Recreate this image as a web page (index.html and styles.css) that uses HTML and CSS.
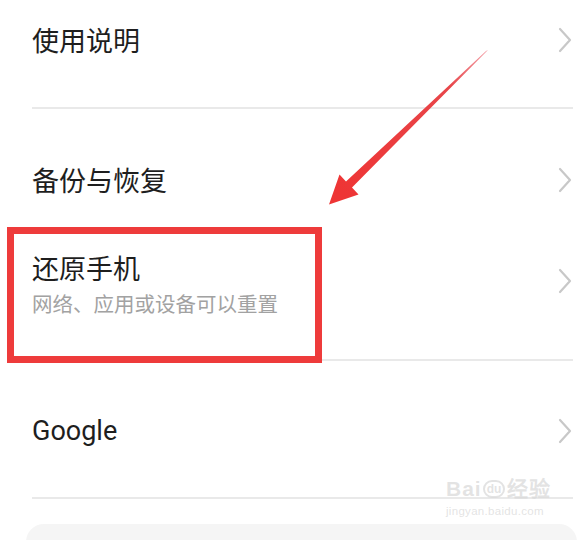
FILE: index.html
```html
<!DOCTYPE html>
<html lang="zh-CN">
<head>
<meta charset="utf-8">
<title>设置</title>
<link rel="stylesheet" href="styles.css">
</head>
<body>
<div class="page">
  <div class="list">
    <div class="row row-first">
      <span class="title">使用说明</span>
      <svg class="chev" viewBox="0 0 16 26" width="16" height="26"><polyline points="3,2 13,13 3,24" /></svg>
    </div>
    <div class="row row-plain">
      <span class="title">备份与恢复</span>
      <svg class="chev" viewBox="0 0 16 26" width="16" height="26"><polyline points="3,2 13,13 3,24" /></svg>
    </div>
    <div class="row row-reset">
      <div class="stack">
        <span class="title">还原手机</span>
        <span class="sub">网络、应用或设备可以重置</span>
      </div>
      <svg class="chev chev-reset" viewBox="0 0 16 26" width="16" height="26"><polyline points="3,2 13,13 3,24" /></svg>
    </div>
    <div class="row row-google">
      <span class="title latin">Google</span>
      <svg class="chev" viewBox="0 0 16 26" width="16" height="26"><polyline points="3,2 13,13 3,24" /></svg>
    </div>
  </div>
  <div class="card"></div>

  <div class="highlight"></div>
  <svg class="arrow" viewBox="0 0 584 540" width="584" height="540">
    <defs>
      <linearGradient id="shaft" x1="487" y1="51" x2="340" y2="190" gradientUnits="userSpaceOnUse">
        <stop offset="0" stop-color="#f4a0a8"/>
        <stop offset="0.25" stop-color="#e8464a"/>
        <stop offset="1" stop-color="#ee3535"/>
      </linearGradient>
    </defs>
    <polygon fill="url(#shaft)" points="488,50 352,187.5 358.5,194.5 329,204.5 339.5,174.5 346,181.5 486,51"/>
  </svg>

  <div class="watermark">
    <div class="wm-top">Bai<span class="paw">du</span>经验</div>
    <div class="wm-bottom">jingyan.baidu.com</div>
  </div>
</div>
</body>
</html>
```

FILE: styles.css
```css
* { box-sizing: border-box; }
html, body {
  margin: 0;
  padding: 0;
  background: #ffffff;
}
body {
  font-family: "Noto Sans CJK SC", "Noto Sans", Roboto, sans-serif;
  color: #1e1e1e;
}
.page {
  position: relative;
  width: 584px;
  height: 540px;
  overflow: hidden;
}
.list {
  padding: 0 11px 0 32px;
}
.row {
  display: flex;
  justify-content: space-between;
  align-items: center;
}
.title {
  font-size: 27px;
  line-height: 34px;
  color: #1e1e1e;
}
.latin {
  font-family: Roboto, "Noto Sans", sans-serif;
  font-size: 27px;
}
.sub {
  font-size: 20.5px;
  line-height: 28px;
  margin-top: 4px;
  color: #a2a2a2;
}
.stack {
  display: flex;
  flex-direction: column;
}
.chev {
  display: block;
  fill: none;
  stroke: #c8c8c8;
  stroke-width: 2.2;
  stroke-linecap: round;
  stroke-linejoin: round;
}
.row-first {
  height: 109px;
  padding-bottom: 27px;
  border-bottom: 2px solid #e9e9e9;
}
.row-plain {
  height: 142px;
}
.row-reset {
  height: 110px;
  align-items: flex-start;
  padding-top: 0;
  border-bottom: 2px solid #e9e9e9;
}
.chev-reset {
  margin-top: 17px;
}
.row-google {
  height: 138px;
  padding-top: 4px;
  border-bottom: 2px solid #e9e9e9;
}
.card {
  margin: 25px 7px 0 26px;
  height: 60px;
  border-radius: 18px;
  background: #f5f5f5;
}
.highlight {
  position: absolute;
  left: 7px;
  top: 227px;
  width: 315px;
  height: 136px;
  border: 7px solid #ee3b3b;
}
.arrow {
  position: absolute;
  left: 0;
  top: 0;
}
.watermark {
  position: absolute;
  left: 446px;
  top: 477px;
  width: 112px;
  color: rgba(215, 215, 215, 0.7);
  font-family: "Liberation Sans", sans-serif;
  text-align: left;
}
.wm-top {
  font-size: 21px;
  line-height: 24px;
  font-weight: bold;
  letter-spacing: 1px;
  display: flex;
  align-items: flex-end;
}
.paw {
  display: inline-block;
  font-size: 12px;
  line-height: 14px;
  border: 2px solid rgba(215, 215, 215, 0.7);
  border-radius: 10px;
  padding: 0 2px;
  margin: 0 2px 3px 1px;
  letter-spacing: 0;
}
.wm-bottom {
  font-size: 11.5px;
  line-height: 16px;
  margin-top: 2px;
  letter-spacing: 0.3px;
}
```
